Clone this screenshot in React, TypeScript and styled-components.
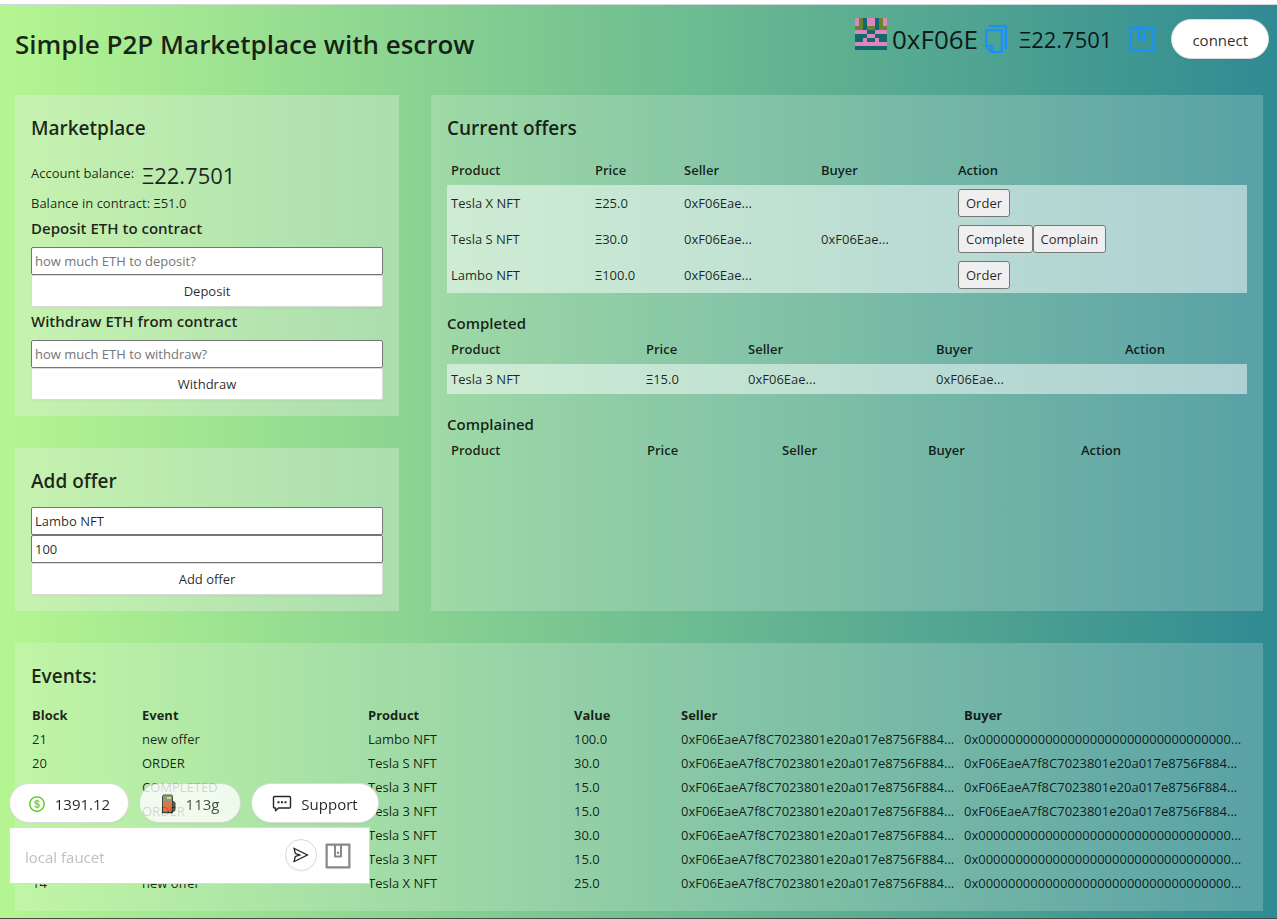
import React from "react";
import styled, { createGlobalStyle } from "styled-components";
import {
  AiOutlineCopy,
  AiOutlineDollarCircle,
  AiOutlineSend,
  AiOutlineWallet,
} from "react-icons/ai";

const GlobalStyle = createGlobalStyle`
  *, *::before, *::after { box-sizing: border-box; }
  body {
    margin: 0;
    color: rgba(0, 0, 0, 0.85);
    font-family: "Open Sans", "Noto Sans", sans-serif;
    font-size: 13px;
    line-height: 22px;
  }
  button, input { font: inherit; color: inherit; margin: 0; }
  h1, h2, h3, p { margin: 0; }
`;

const Page = styled.div`
  min-height: 100vh;
  display: flex;
  flex-direction: column;
  border-bottom: 1px solid #4a4a4a;
`;

const TopStrip = styled.div`
  height: 5px;
  background: #ffffff;
  border-bottom: 1px solid #d4d6dc;
`;

const Main = styled.main`
  flex: 1;
  padding: 0 14px 7px 15px;
  background: linear-gradient(to right, #b5f691, #308a92);
`;

const Header = styled.header`
  height: 90px;
  display: flex;
  justify-content: space-between;
  align-items: flex-start;
`;

const PageTitle = styled.h1`
  padding-top: 19px;
  font-size: 26px;
  line-height: 40px;
  font-weight: 600;
`;

const Account = styled.div`
  display: flex;
  align-items: center;
  height: 40px;
  margin: 14px -6px 0 0;
`;

const Address = styled.span`
  margin: 0 2px 0 5px;
  font-size: 26px;
  line-height: 40px;
`;

const HeaderBalance = styled.span`
  margin: 0 14px 0 7px;
  font-size: 22px;
  line-height: 40px;
`;

const IconButton = styled.button`
  display: flex;
  padding: 0;
  border: 0;
  background: none;
  color: #1890ff;
  cursor: pointer;
`;

const WalletIcon = styled(AiOutlineWallet)`
  transform: rotate(-90deg);
`;

const Pill = styled.button<{ $faded?: boolean }>`
  display: inline-flex;
  align-items: center;
  justify-content: center;
  gap: 9px;
  height: 40px;
  padding: 2px 20px 0;
  border: 1px solid #d9d9d9;
  border-radius: 40px;
  background: #ffffff;
  box-shadow: 0 2px 0 rgba(0, 0, 0, 0.02);
  font-size: 15px;
  white-space: nowrap;
  opacity: ${({ $faded }) => ($faded ? 0.8 : 1)};
  cursor: pointer;
`;

const Connect = styled(Pill)`
  margin-left: 13px;
`;

const DockPill = styled(Pill)`
  padding: 2px 0 0;
`;

const Panels = styled.div`
  display: grid;
  grid-template-columns: 6fr 13fr;
  gap: 32px;
`;

const SideColumn = styled.div`
  display: flex;
  flex-direction: column;
  gap: 32px;
`;

const Panel = styled.section<{ $light?: boolean; $wide?: boolean }>`
  min-width: 0;
  padding: 16px;
  background: ${({ $light }) => ($light ? "rgba(240, 240, 240, 0.32)" : "rgba(250, 250, 250, 0.2)")};
  ${({ $wide }) => $wide && "grid-column: 1 / -1;"}
`;

const PanelTitle = styled.h2`
  margin-bottom: 8px;
  font-size: 19px;
  line-height: 35px;
  font-weight: 600;
`;

const FormTitle = styled.h3`
  margin-bottom: 5px;
  font-size: 15px;
  line-height: 28px;
  font-weight: 600;
`;

const TableTitle = styled.h3`
  margin-top: 20px;
  font-size: 15px;
  line-height: 20px;
  font-weight: 600;
`;

const BalanceRow = styled.p`
  display: flex;
  align-items: center;
  gap: 8px;
  height: 38px;
`;

const BigValue = styled.span`
  padding-top: 4px;
  font-size: 22px;
  line-height: 36px;
`;

const Form = styled.form`
  display: flex;
  flex-direction: column;
`;

const TextInput = styled.input`
  width: 100%;
  height: 28px;
  padding: 1px 3px;
  border: 1px solid #767676;
  border-radius: 2px;
  background: #ffffff;
  &::placeholder { color: #757575; }
`;

const SubmitButton = styled.button`
  height: 32px;
  border: 1px solid #d9d9d9;
  border-radius: 2px;
  background: #ffffff;
  box-shadow: 0 2px 0 rgba(0, 0, 0, 0.02);
  cursor: pointer;
`;

const Table = styled.table`
  width: 100%;
  table-layout: fixed;
  border-collapse: collapse;
  text-align: left;
`;

const Col = styled.col<{ $share: number }>`
  width: ${({ $share }) => $share * 100}%;
`;

const OfferHead = styled.th`
  height: 31px;
  padding: 0 4px;
  font-weight: 600;
`;

const OfferBody = styled.tbody`
  background: rgba(255, 255, 255, 0.5);
`;

const OfferCell = styled.td`
  height: 30px;
  padding: 4px;
`;

const ActionButton = styled.button`
  height: 28px;
  padding: 1px 7px;
  border: 1px solid #767676;
  border-radius: 3px;
  background: #efefef;
  vertical-align: top;
  cursor: pointer;
`;

const EventHead = styled.th`
  height: 25px;
  padding: 1px;
  font-weight: 700;
`;

const EventCell = styled.td`
  height: 24px;
  padding: 1px;
  white-space: nowrap;
`;

const Dock = styled.aside`
  position: fixed;
  left: 9px;
  bottom: 35px;
`;

const DockPills = styled.div`
  display: grid;
  grid-template-columns: 120px 102px 128px;
  gap: 10px;
  margin-bottom: 4px;
`;

const Faucet = styled.form`
  display: flex;
  align-items: center;
  width: 361px;
  height: 57px;
  padding: 0 15px;
  border: 1px solid #d9d9d9;
  background: #ffffff;
`;

const FaucetInput = styled.input`
  flex: 1;
  min-width: 0;
  padding: 2px 0 0;
  border: 0;
  outline: 0;
  background: none;
  font-size: 15px;
  &::placeholder { color: #bfbfbf; }
`;

const SendButton = styled.button`
  display: flex;
  align-items: center;
  justify-content: center;
  width: 32px;
  height: 32px;
  margin: 0 5px 2px 0;
  padding: 0;
  border: 1px solid #d9d9d9;
  border-radius: 50%;
  background: #ffffff;
  box-shadow: 0 2px 0 rgba(0, 0, 0, 0.02);
  cursor: pointer;
`;

const FaucetWallet = styled(IconButton)`
  color: #888888;
`;

const BlockieSvg = styled.svg`
  margin-bottom: 10px;
`;

const BLOCKIE_COLOURS: Record<string, string> = { p: "#e084bd", o: "#69832f", t: "#0f6b6b" };
const BLOCKIE_ROWS = ["potpptop", "potpptop", "ootootoo", "pppttppp", "tttppttt", "ttpttptt", "pppppppp", "tttttttt"];

function Blockie() {
  return (
    <BlockieSvg width="32" height="32" viewBox="0 0 8 8" shapeRendering="crispEdges" aria-hidden="true">
      {BLOCKIE_ROWS.flatMap((row, y) =>
        row.split("").map((c, x) => (
          <rect key={`${x}-${y}`} x={x} y={y} width="1" height="1" fill={BLOCKIE_COLOURS[c]} />
        ))
      )}
    </BlockieSvg>
  );
}

function FuelPump() {
  return (
    <svg width="16" height="20" viewBox="0 0 16 20" aria-hidden="true">
      <path d="M11.5 7l2.500 1.500v7.500q-1 1.500-2.500 1z" fill="#4a3a38" stroke="#222" />
      <path d="M1.500 2.500q0-1.500 1.500-1.500h7q1.500 0 1.500 1.500v16h-10z" fill="#f0562c" stroke="#222" />
      <path d="M2 3q0-1.500 1.500-1.500h6q1.500 0 1.500 1.500v4h-9z" fill="#7c8580" />
      <rect x="6" y="3" width="4" height="2" fill="#d6e36a" />
      <path d="M1 18.500h11" stroke="#222" strokeWidth="1.500" />
    </svg>
  );
}

function ChatBubble() {
  return (
    <svg width="20" height="18" viewBox="0 0 20 18" fill="none" stroke="currentColor" strokeWidth="1.400" aria-hidden="true">
      <path d="M2.500 1.500h15q1 0 1 1v9.500q0 1-1 1h-11l-3 2.800v-2.800h-1q-1 0-1-1v-9.500q0-1 1-1z" strokeLinejoin="round" />
      <path d="M5.500 7.300h2M9 7.300h2M12.500 7.300h2" strokeWidth="2" />
    </svg>
  );
}

interface Offer {
  product: string;
  price: string;
  seller: string;
  buyer?: string;
  actions?: string[];
}

const CURRENT: Offer[] = [
  { product: "Tesla X NFT", price: "Ξ25.0", seller: "0xF06Eae...", actions: ["Order"] },
  { product: "Tesla S NFT", price: "Ξ30.0", seller: "0xF06Eae...", buyer: "0xF06Eae...", actions: ["Complete", "Complain"] },
  { product: "Lambo NFT", price: "Ξ100.0", seller: "0xF06Eae...", actions: ["Order"] },
];

const COMPLETED: Offer[] = [
  { product: "Tesla 3 NFT", price: "Ξ15.0", seller: "0xF06Eae...", buyer: "0xF06Eae..." },
];

const ME = "0xF06EaeA7f8C7023801e20a017e8756F884...";
const NOBODY = `0x${"0".repeat(34)}...`;

const EVENTS = [
  ["21", "new offer", "Lambo NFT", "100.0", ME, NOBODY],
  ["20", "ORDER", "Tesla S NFT", "30.0", ME, ME],
  ["19", "COMPLETED", "Tesla 3 NFT", "15.0", ME, ME],
  ["18", "ORDER", "Tesla 3 NFT", "15.0", ME, ME],
  ["16", "new offer", "Tesla S NFT", "30.0", ME, NOBODY],
  ["15", "new offer", "Tesla 3 NFT", "15.0", ME, NOBODY],
  ["14", "new offer", "Tesla X NFT", "25.0", ME, NOBODY],
];

function Columns({ weights }: { weights: number[] }) {
  const total = weights.reduce((sum, w) => sum + w, 0);
  return (
    <colgroup>
      {weights.map((w, i) => (
        <Col key={i} $share={w / total} />
      ))}
    </colgroup>
  );
}

function OfferTable({ label, weights, offers }: { label: string; weights: number[]; offers: Offer[] }) {
  return (
    <Table aria-label={label}>
      <Columns weights={weights} />
      <thead>
        <tr>
          {["Product", "Price", "Seller", "Buyer", "Action"].map((name) => (
            <OfferHead key={name} scope="col">{name}</OfferHead>
          ))}
        </tr>
      </thead>
      <OfferBody>
        {offers.map((offer) => (
          <tr key={offer.product}>
            <OfferCell>{offer.product}</OfferCell>
            <OfferCell>{offer.price}</OfferCell>
            <OfferCell>{offer.seller}</OfferCell>
            <OfferCell>{offer.buyer}</OfferCell>
            <OfferCell>
              {offer.actions?.map((action) => (
                <ActionButton key={action} type="button">{action}</ActionButton>
              ))}
            </OfferCell>
          </tr>
        ))}
      </OfferBody>
    </Table>
  );
}

export default function App() {
  return (
    <>
      <GlobalStyle />
      <Page>
        <TopStrip />
        <Main>
          <Header>
            <PageTitle>Simple P2P Marketplace with escrow</PageTitle>
            <Account>
              <Blockie />
              <Address>0xF06E</Address>
              <IconButton type="button" aria-label="Copy address"><AiOutlineCopy size={32} /></IconButton>
              <HeaderBalance>Ξ22.7501</HeaderBalance>
              <IconButton type="button" aria-label="Open wallet"><WalletIcon size={32} /></IconButton>
              <Connect type="button">connect</Connect>
            </Account>
          </Header>
          <Panels>
            <SideColumn>
              <Panel $light>
                <PanelTitle>Marketplace</PanelTitle>
                <BalanceRow>Account balance: <BigValue>Ξ22.7501</BigValue></BalanceRow>
                <p>Balance in contract: Ξ51.0</p>
                <Form>
                  <FormTitle>Deposit ETH to contract</FormTitle>
                  <TextInput aria-label="Deposit amount" placeholder="how much ETH to deposit?" />
                  <SubmitButton type="button">Deposit</SubmitButton>
                </Form>
                <Form>
                  <FormTitle>Withdraw ETH from contract</FormTitle>
                  <TextInput aria-label="Withdraw amount" placeholder="how much ETH to withdraw?" />
                  <SubmitButton type="button">Withdraw</SubmitButton>
                </Form>
              </Panel>
              <Panel $light>
                <PanelTitle>Add offer</PanelTitle>
                <Form>
                  <TextInput aria-label="Product name" defaultValue="Lambo NFT" />
                  <TextInput aria-label="Price" defaultValue="100" />
                  <SubmitButton type="button">Add offer</SubmitButton>
                </Form>
              </Panel>
            </SideColumn>
            <Panel>
              <PanelTitle>Current offers</PanelTitle>
              <OfferTable label="Current offers" weights={[144, 89, 137, 137, 293]} offers={CURRENT} />
              <TableTitle>Completed</TableTitle>
              <OfferTable label="Completed" weights={[195, 102, 188, 189, 126]} offers={COMPLETED} />
              <TableTitle>Complained</TableTitle>
              <OfferTable label="Complained" weights={[196, 135, 146, 153, 170]} offers={[]} />
            </Panel>
            <Panel $wide>
              <PanelTitle>Events:</PanelTitle>
              <Table aria-label="Events">
                <Columns weights={[110, 226, 206, 107, 283, 284]} />
                <thead>
                  <tr>
                    {["Block", "Event", "Product", "Value", "Seller", "Buyer"].map((name) => (
                      <EventHead key={name} scope="col">{name}</EventHead>
                    ))}
                  </tr>
                </thead>
                <tbody>
                  {EVENTS.map((row) => (
                    <tr key={row[0]}>
                      {row.map((cell, i) => (
                        <EventCell key={i}>{cell}</EventCell>
                      ))}
                    </tr>
                  ))}
                </tbody>
              </Table>
            </Panel>
          </Panels>
        </Main>
      </Page>
      <Dock>
        <DockPills>
          <DockPill type="button"><AiOutlineDollarCircle size={18} color="#52c41a" />1391.12</DockPill>
          <DockPill type="button" $faded><FuelPump />113g</DockPill>
          <DockPill type="button"><ChatBubble />Support</DockPill>
        </DockPills>
        <Faucet>
          <FaucetInput aria-label="Faucet address" placeholder="local faucet" />
          <SendButton type="button" aria-label="Send"><AiOutlineSend size={18} /></SendButton>
          <FaucetWallet type="button" aria-label="Faucet wallet"><WalletIcon size={32} /></FaucetWallet>
        </Faucet>
      </Dock>
    </>
  );
}
